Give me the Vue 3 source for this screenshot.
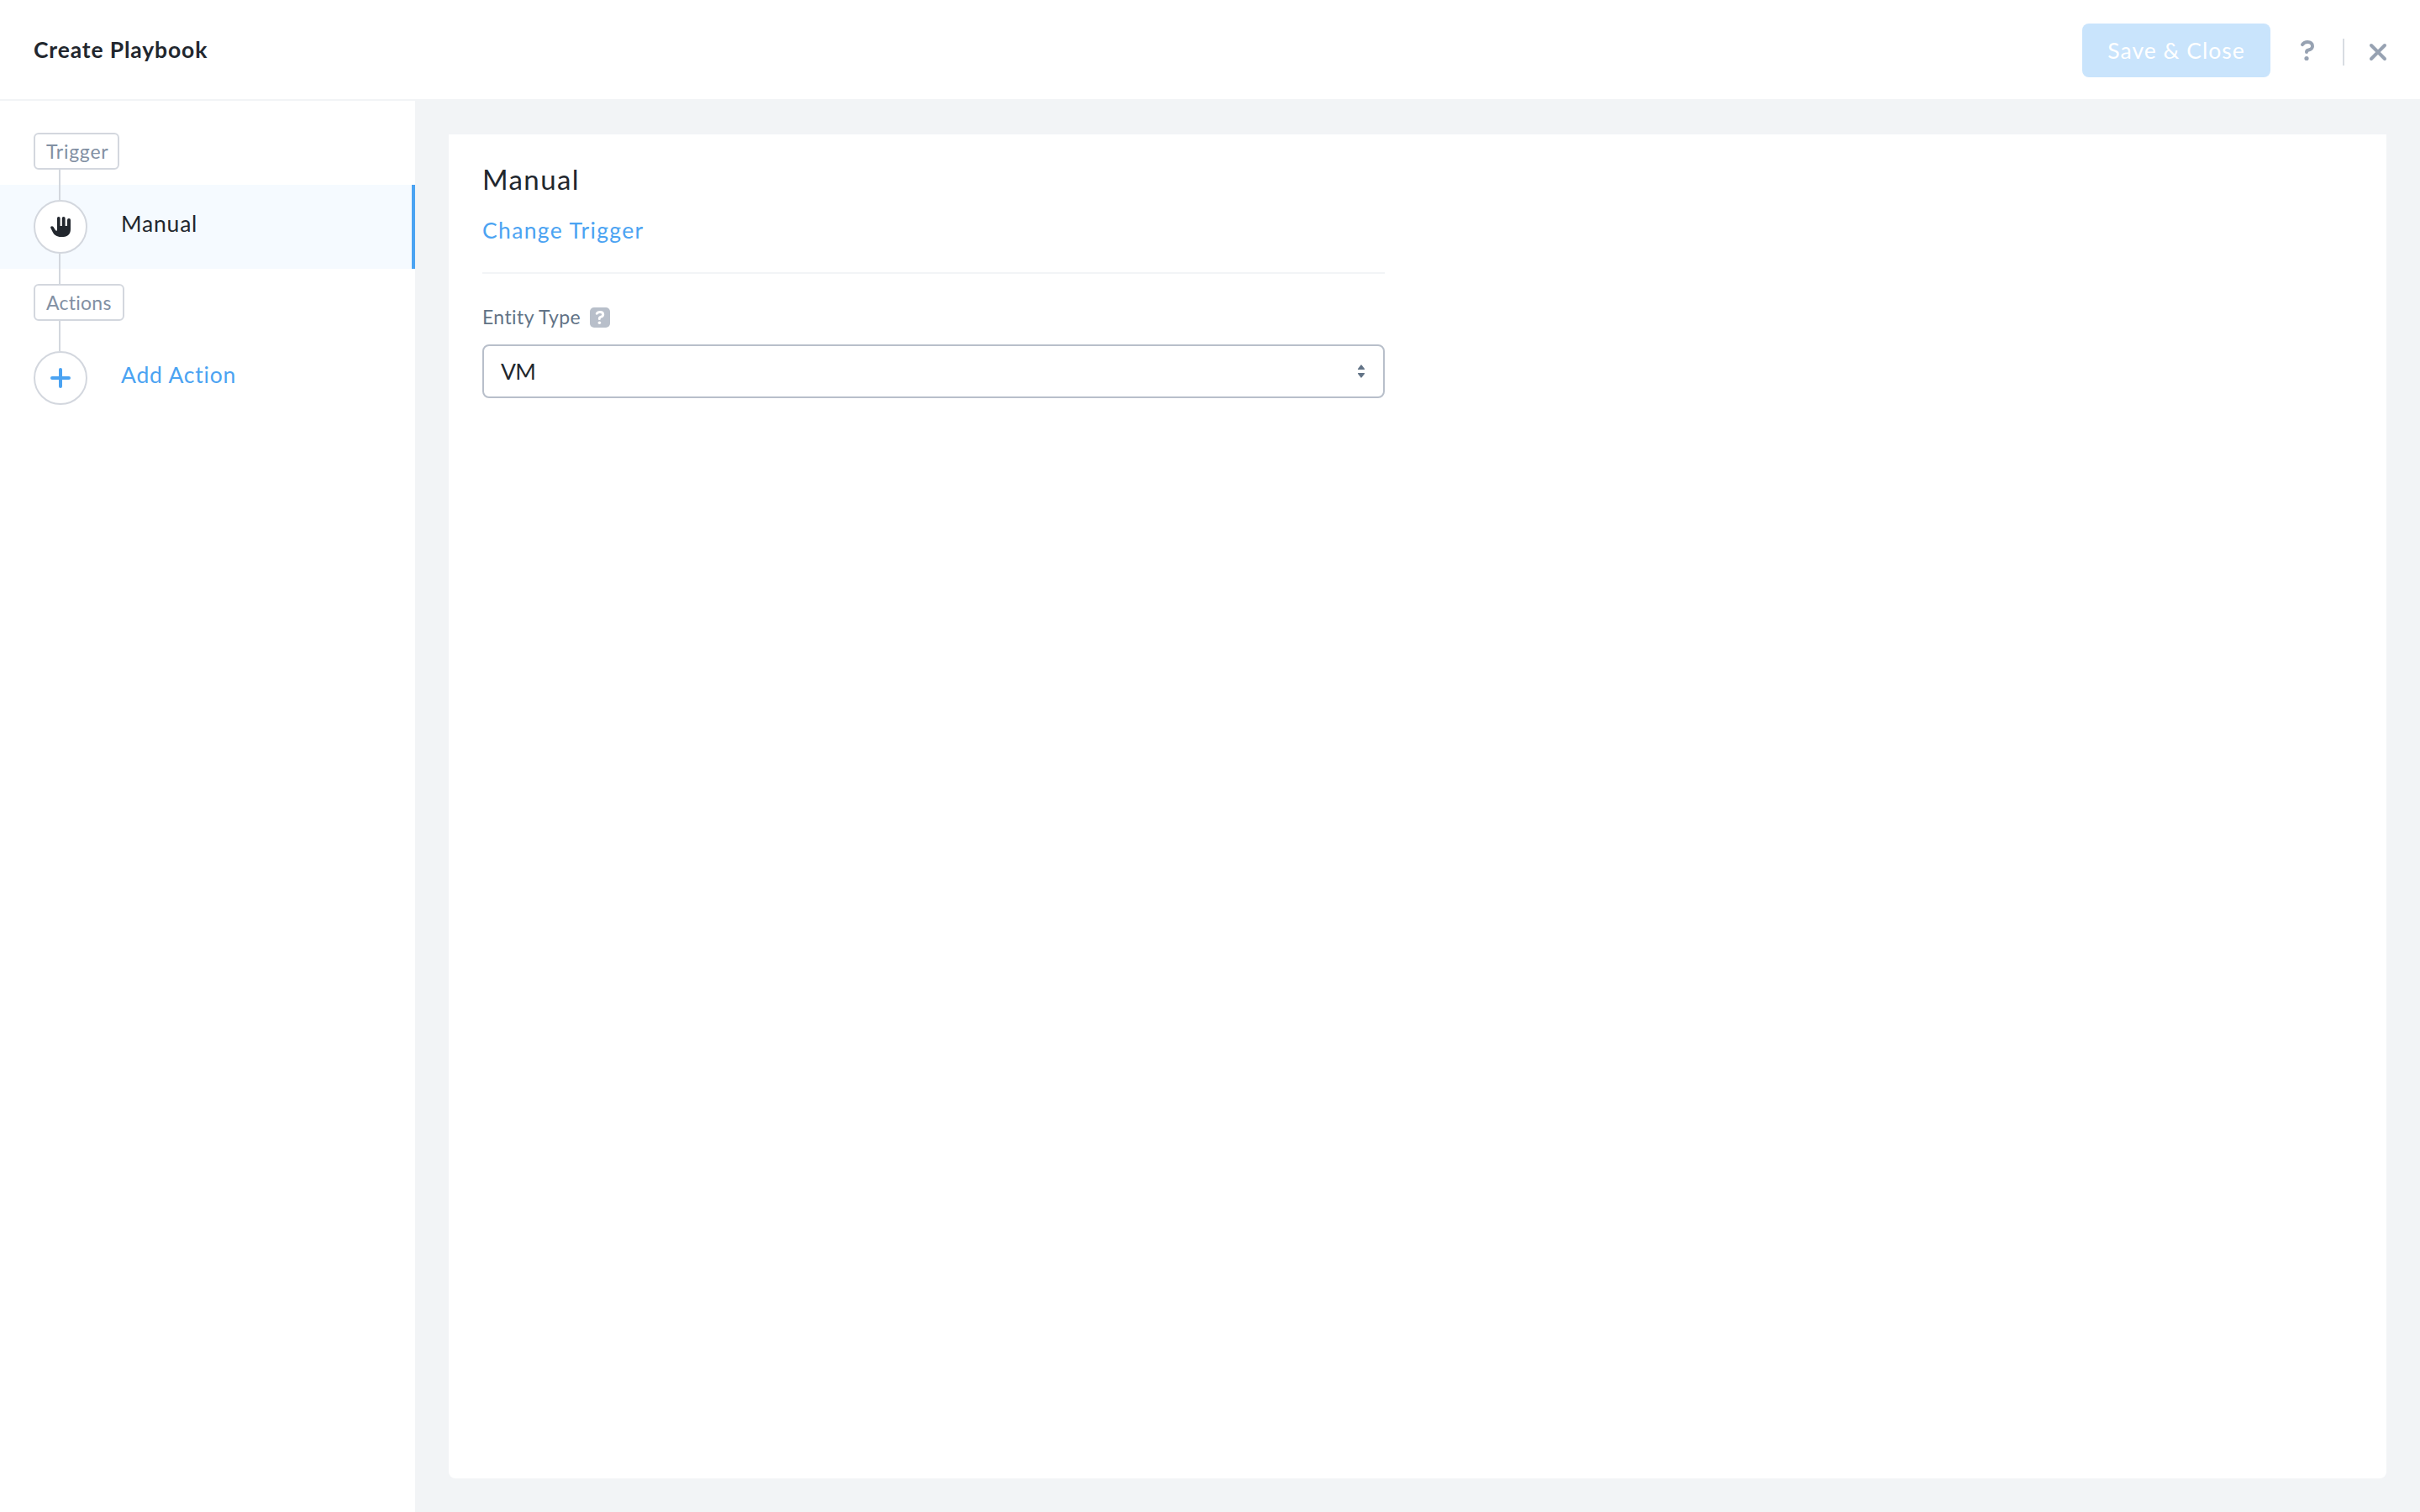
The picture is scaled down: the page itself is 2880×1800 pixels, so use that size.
<template>
  <div class="page">
    <header class="header">
      <h1 class="header-title">Create Playbook</h1>
      <div class="header-actions">
        <button type="button" class="btn-save" disabled>Save &amp; Close</button>
        <button type="button" class="btn-icon btn-help">
          <svg width="16" height="24" viewBox="0 0 16 24">
            <path
              d="M2 5.2C3.6 2.8 5.6 2 8.2 2C11.800 2 14 4 14 6.900C14 10.300 11 11.200 8.700 11.700C7.300 12 7 12.700 7 14"
              fill="none"
              stroke="#97a2b2"
              stroke-width="4"
              stroke-linecap="round"
              stroke-linejoin="round"
            />
            <circle cx="7" cy="21.500" r="2.600" fill="#97a2b2" />
          </svg>
        </button>
        <span class="separator"></span>
        <button type="button" class="btn-icon btn-close">
          <svg width="20" height="20" viewBox="0 0 20 20">
            <path
              d="M2 2L18 18M18 2L2 18"
              stroke="#97a2b2"
              stroke-width="4"
              stroke-linecap="round"
            />
          </svg>
        </button>
      </div>
    </header>

    <div class="body">
      <aside class="sidebar">
        <template v-for="group in groups" :key="group.tag">
          <div class="tag" :class="group.tagClass">{{ group.tag }}</div>
          <div class="line"></div>
          <div class="step" :class="{ active: group.active }">
            <div class="rail">
              <div class="line"></div>
              <div class="circle">
                <svg v-if="group.icon === 'hand'" width="24" height="24" viewBox="0 0 24 24">
                  <path
                    d="M8 16V1.800A1.800 1.800 0 0 1 11.600 1.800V11H13.800V1.800A1.800 1.800 0 0 1 17.600 1.800V11H20V3.900A2 2 0 0 1 24 3.900V15C24 20.500 20.500 24 15.500 24H12.500C7.500 24 4.200 21.500 2.600 18L.2 13.200C-.3 11.500 2.100 10.200 3.500 12L5.800 15.800C6.400 16.800 8 17 8 16Z"
                    fill="#22272e"
                  />
                </svg>
                <svg v-else width="24" height="24" viewBox="0 0 24 24">
                  <path
                    d="M12 2V22M2 12H22"
                    stroke="#4ba3f2"
                    stroke-width="4"
                    stroke-linecap="round"
                  />
                </svg>
              </div>
              <div v-if="group.active" class="line"></div>
            </div>
            <span class="step-label">{{ group.label }}</span>
          </div>
          <div v-if="group.active" class="line"></div>
        </template>
      </aside>

      <main class="content">
        <section class="card">
          <div class="form">
            <h2 class="form-title">Manual</h2>
            <a class="change-link">Change Trigger</a>
            <hr class="divider" />
            <div class="field-label">
              <span>Entity Type</span>
              <svg width="24" height="24" viewBox="0 0 24 24">
                <rect width="24" height="24" rx="5" fill="#b8bfca" />
                <path
                  d="M8.300 7.200C9.200 6 10.400 5.500 12 5.500C14.200 5.500 15.700 6.500 15.700 8.400C15.700 10.400 14 11 12.500 11.400C11.500 11.700 11.300 12.200 11.300 13.500"
                  fill="none"
                  stroke="#fff"
                  stroke-width="3"
                  stroke-linecap="round"
                />
                <circle cx="11.400" cy="18.300" r="1.800" fill="#fff" />
              </svg>
            </div>
            <div class="select">
              <span>{{ entityType }}</span>
              <svg width="8" height="16" viewBox="0 0 8 16">
                <path
                  d="M4 .9L7.500 5.400H.5ZM4 15.100L7.500 10.600H.5Z"
                  fill="#627386"
                  stroke="#627386"
                  stroke-width="1.200"
                  stroke-linejoin="round"
                />
              </svg>
            </div>
          </div>
        </section>
      </main>
    </div>
  </div>
</template>

<script setup>
import { ref } from "vue";

const entityType = ref("VM");

const groups = ref([
  {
    tag: "Trigger",
    tagClass: "tag-trigger",
    label: "Manual",
    icon: "hand",
    active: true,
  },
  {
    tag: "Actions",
    tagClass: "tag-actions",
    label: "Add Action",
    icon: "plus",
    active: false,
  },
]);
</script>

<style>
body {
  margin: 0;
  background: #fff;
}
</style>

<style scoped>
* {
  box-sizing: border-box;
}

.page {
  display: flex;
  flex-direction: column;
  height: 100vh;
  font-family: Lato, sans-serif;
  font-size: 26.5px;
  line-height: 36px;
  color: #22272e;
  white-space: nowrap;
}
svg {
  display: block;
  overflow: visible;
}

.header {
  display: flex;
  justify-content: space-between;
  align-items: center;
  height: 120px;
  flex: none;
  padding: 0 40px;
  border-bottom: 2px solid #f2f4f6;
}
.header-title {
  margin: 0;
  padding-bottom: 1px;
  font-size: 26.5px;
  font-weight: 700;
  letter-spacing: 0.85px;
}
.header-actions {
  display: flex;
  align-items: center;
  padding-top: 2px;
}
.btn-save {
  width: 224px;
  height: 64px;
  padding: 0;
  border: none;
  border-radius: 8px;
  background: #c9e4fc;
  color: #fff;
  font: inherit;
  letter-spacing: 1px;
}
.btn-icon {
  padding: 0;
  border: none;
  background: none;
}
.btn-help {
  margin-left: 36px;
}
.separator {
  width: 2px;
  height: 32px;
  margin: 4px 30px 0 34px;
  background: #d8dce2;
}
.btn-close {
  padding-top: 4px;
}

.body {
  display: flex;
  flex: 1;
}
.sidebar {
  width: 494px;
  flex: none;
  padding-top: 38px;
  background: #fff;
}
.tag {
  display: flex;
  align-items: center;
  height: 44px;
  margin-left: 40px;
  padding: 0 0 1px 13px;
  border: 2px solid #d3d7de;
  border-radius: 6px;
  font-size: 23px;
  color: #8290a3;
}
.tag-trigger {
  width: 102px;
  letter-spacing: 0.75px;
}
.tag-actions {
  width: 108px;
  letter-spacing: 0.25px;
}
.line {
  width: 2px;
  height: 18px;
  margin-left: 70px;
  background: #d3d7de;
}
.step {
  display: flex;
  height: 100px;
  border-right: 4px solid transparent;
  color: #4ba3f2;
}
.step.active {
  background: #f5faff;
  border-right-color: #4ba3f2;
  color: #22272e;
}
.circle {
  display: flex;
  align-items: center;
  justify-content: center;
  width: 64px;
  height: 64px;
  margin-left: 40px;
  border: 2px solid #d3d7de;
  border-radius: 50%;
  background: #fff;
}
.step-label {
  margin: 28px 0 0 40px;
  letter-spacing: 0.8px;
}

.content {
  flex: 1;
  padding: 40px;
  background: #f2f4f6;
}
.card {
  height: 100%;
  padding: 35px 40px;
  border-radius: 0 0 8px 8px;
  background: #fff;
}
.form {
  display: flex;
  flex-direction: column;
  width: 1074px;
}
.form-title {
  margin: 0;
  font-size: 33px;
  font-weight: 400;
  letter-spacing: 1.4px;
}
.change-link {
  margin-top: 25px;
  color: #4ba3f2;
  letter-spacing: 1.35px;
}
.divider {
  width: 100%;
  height: 2px;
  margin: 32px 0 33px;
  border: none;
  background: #f2f4f6;
}
.field-label {
  display: flex;
  align-items: center;
  height: 36px;
  font-size: 23px;
  color: #627386;
}
.field-label span {
  width: 128px;
  letter-spacing: 0.4px;
}
.field-label svg {
  margin-top: 2px;
}
.select {
  display: flex;
  align-items: center;
  justify-content: space-between;
  height: 64px;
  margin-top: 15px;
  padding: 0 22px 0 20px;
  border: 2px solid #b8bfca;
  border-radius: 8px;
}
.select span {
  letter-spacing: -0.8px;
}
</style>
